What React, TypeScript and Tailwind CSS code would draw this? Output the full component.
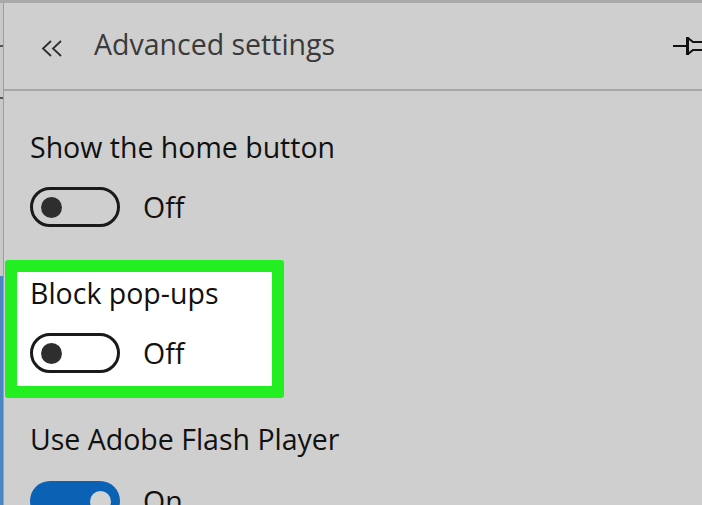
const font = { fontFamily: '"Open Sans", "Noto Sans", sans-serif' }

function Toggle({ on }: { on?: boolean }) {
    if (on) {
        return (
            <div className="w-[90px] h-[40px] rounded-full bg-[#0b62b5] flex items-center justify-end pr-[9px] shrink-0">
                <div className="size-[21px] rounded-full bg-[#d3d3d3]"></div>
            </div>
        )
    }
    return (
        <div className="w-[90px] h-[40px] rounded-full border-[3px] border-[#1a1a1a] flex items-center pl-[8px] shrink-0">
            <div className="size-[21px] rounded-full bg-[#2e2e2e]"></div>
        </div>
    )
}

function Setting({ label, on, gap }: { label: string; on?: boolean; gap: string }) {
    return (
        <div className="flex flex-col">
            <div className="text-[28.5px] leading-9 text-[#111] whitespace-nowrap">{label}</div>
            <div className={"flex items-center gap-[23px] " + gap}>
                <Toggle on={on} />
                <span className="text-[28.5px] leading-9 text-[#111]">{on ? 'On' : 'Off'}</span>
            </div>
        </div>
    )
}

export default function App() {
    return (
        <div style={font} className="w-[702px] h-[505px] flex bg-[#cfcfcf] overflow-hidden border-t-[3px] border-[#a9a9a9]">
            {/* window edge on the left */}
            <div className="w-[3px] flex flex-col shrink-0">
                <div className="h-[273px] bg-[#c9c9c9] flex flex-col">
                    <div className="h-[42px]"></div>
                    <div className="h-[2px] bg-[#555]"></div>
                    <div className="h-[50px]"></div>
                    <div className="h-[2px] bg-[#555]"></div>
                </div>
                <div className="flex-1 bg-[#4a86c4]"></div>
            </div>
            <div className="w-px bg-[#9e9e9e] shrink-0"></div>

            <div className="flex-1 flex flex-col">
                <div className="h-[88px] border-b-2 border-[#a7a7a7] flex items-start shrink-0">
                    <svg className="ml-[37px] mt-[37px]" width="22" height="17" viewBox="0 0 22 17" fill="none" stroke="#2e2e2e" strokeWidth="1.8">
                        <path d="M10 1 L2 8.5 L10 16" />
                        <path d="M20 1 L12 8.5 L20 16" />
                    </svg>
                    <div className="ml-[31px] mt-[23px] text-[28.5px] leading-9 text-[#3a3a3a] whitespace-nowrap">Advanced settings</div>
                    <svg className="ml-auto mt-[31px]" width="30" height="24" viewBox="0 0 30 24" fill="none" stroke="#111" strokeWidth="2">
                        <path d="M1 12 H15" />
                        <path d="M15.5 3 V21" strokeWidth="3" />
                        <path d="M16 4 L21 8 H31" />
                        <path d="M16 20 L21 16 H31" />
                    </svg>
                </div>

                <div className="ml-[26px] mt-[38px]">
                    <Setting label="Show the home button" gap="mt-[22px]" />
                </div>

                <div className="ml-px mt-[33px] w-[279px] border-[12px] border-[#22ee22] rounded-[3px] bg-white pl-[13px] pt-[3px] pb-[13px]">
                    <Setting label="Block pop-ups" gap="mt-[22px]" />
                </div>

                <div className="ml-[26px] mt-[23px]">
                    <Setting label="Use Adobe Flash Player" on gap="mt-[24px]" />
                </div>
            </div>
        </div>
    )
}
